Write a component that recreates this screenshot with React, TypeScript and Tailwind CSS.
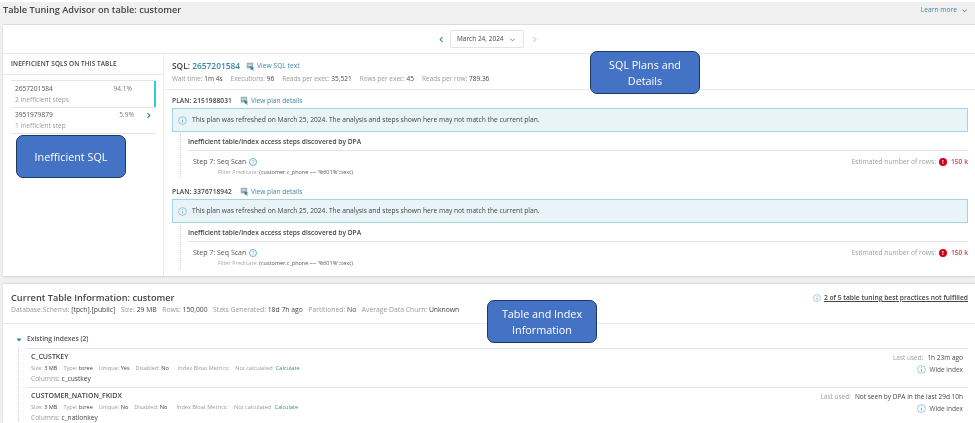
import React from "react";

const font = { fontFamily: '"Open Sans", "Noto Sans", sans-serif' };

function Info({ size = 11 }: { size?: number }) {
  return (
    <svg width={size} height={size} viewBox="0 0 12 12" fill="none" className="shrink-0">
      <circle cx="6" cy="6" r="5.2" stroke="#6fb3c9" strokeWidth="0.9" />
      <path d="M6 5.2V9" stroke="#5a9fb6" strokeWidth="1" />
      <circle cx="6" cy="3.4" r="0.65" fill="#5a9fb6" />
    </svg>
  );
}

function PlanIcon() {
  return (
    <svg width="9" height="9" viewBox="0 0 12 12" className="shrink-0">
      <rect x="1" y="1" width="8.5" height="7.5" fill="#8fa9b5" />
      <rect x="2.2" y="2.4" width="6" height="1" fill="#dfe8ec" />
      <rect x="2.2" y="4.4" width="6" height="1" fill="#dfe8ec" />
      <path d="M5.5 5.5 L11 8 L8.8 9 L10.5 11 L9.5 11.6 L8 9.6 L6.6 11 Z" fill="#2f7f9c" />
    </svg>
  );
}

function M({ k, v, cls = "" }: { k: string; v: string; cls?: string }) {
  return (
    <span className={cls}>
      <span className="text-[#9a9a9a]">{k} </span>
      <span className="text-[#444444]">{v}</span>
    </span>
  );
}

function Plan({ id }: { id: string }) {
  return (
    <div>
      <div className="flex h-[18px] items-center pl-[8px] pt-[3px] text-[6.6px]">
        <span className="font-semibold tracking-[0.1px] text-[#444444]">PLAN: {id}</span>
        <span className="ml-[8px] flex items-center gap-[2px] text-[#3c86a3]">
          <PlanIcon />
          <span className="text-[6.6px]">View plan details</span>
        </span>
      </div>
      <div className="ml-[8px] mr-[7px] flex h-[24px] items-center gap-[5px] border border-[#a5d3e2] bg-[#e8f4f8] pl-[5px] text-[6.7px] text-[#444444]">
        <Info size={9} />
        <span>This plan was refreshed on March 25, 2024. The analysis and steps shown here may not match the current plan.</span>
      </div>
      <div className="ml-[16px] mr-[7px] mt-[1px] border-l border-dotted border-[#cfcfcf] pl-[7px]">
        <div className="flex h-[18px] items-center border-b border-[#e4e4e4] text-[6.65px] font-semibold text-[#444444]">
          Inefficient table/index access steps discovered by DPA
        </div>
        <div className="flex h-[27px] items-start justify-between pl-[5px] pt-[6px]">
          <div>
            <div className="flex items-center gap-[3px] text-[7px] text-[#555555]">
              <span>Step 7: Seq Scan</span>
              <span className="flex h-[8px] w-[8px] items-center justify-center rounded-full border border-[#6fb3c9] text-[5.5px] leading-none text-[#5a9fb6]">?</span>
            </div>
            <div className="ml-[25px] text-[5.5px] leading-[8px]">
              <span className="text-[#a8a8a8]">Filter Predicate: </span>
              <span className="text-[#555555]">(customer.c_phone ~~ '%601%'::text)</span>
            </div>
          </div>
          <div className="flex items-center gap-[3px] text-[6.7px]">
            <span className="text-[#a0a0a0]">Estimated number of rows:</span>
            <span className="flex h-[8px] w-[8px] items-center justify-center rounded-full bg-[#d0021b] text-[6px] font-bold leading-none text-white">!</span>
            <span className="ml-[1px] font-semibold text-[#d9473f]">150 k</span>
          </div>
        </div>
      </div>
    </div>
  );
}

function IndexRow({ name, unique, lastUsed, column }: { name: string; unique: string; lastUsed: string; column: string }) {
  return (
    <div className="flex h-[39px] justify-between border-t border-[#e4e4e4] pl-[5px] pr-[5px]">
      <div className="pt-[1px]">
        <div className="text-[7px] font-semibold leading-[13px] text-[#444444]">{name}</div>
        <div className="flex h-[10px] items-center gap-[6px] text-[5.6px]">
          <M k="Size:" v="3 MB" />
          <M k="Type:" v="btree" />
          <M k="Unique:" v={unique} />
          <M k="Disabled:" v="No" />
          <span className="ml-[3px] text-[#9a9a9a]">Index Bloat Metrics:</span>
          <span className="text-[#9a9a9a]">Not calculated</span>
          <span className="-ml-[3px] text-[#3c86a3]">Calculate</span>
        </div>
        <div className="text-[6.6px] leading-[12px]">
          <M k="Columns:" v={column} />
        </div>
      </div>
      <div className="flex flex-col items-end pt-[2px]">
        <div className="text-[6.5px] leading-[13px]">
          <span className="text-[#a0a0a0]">Last used:</span>
          <span className="ml-[4px] text-[#444444]">{lastUsed}</span>
        </div>
        <div className="mt-[1px] flex items-center gap-[3px] text-[6.5px] text-[#555555]">
          <Info size={9} />
          Wide index
        </div>
      </div>
    </div>
  );
}

function Callout({ cls, children }: { cls: string; children: React.ReactNode }) {
  return (
    <div className={"absolute z-10 flex flex-col items-center justify-center rounded-[7px] border border-[#1f3763] bg-[#4472c4] text-center text-[10.8px] leading-[15.5px] text-white " + cls}>
      {children}
    </div>
  );
}

export default function App() {
  return (
    <div style={font} className="relative h-[423px] w-[975px] overflow-hidden bg-white blur-[0.3px]">
      <div className="mt-[2px] h-[421px] bg-[#f0f0f0] pl-[3px]">
        <div className="flex h-[22px] items-start justify-between pr-[7px] pt-[1px]">
          <h1 className="text-[9.2px] font-semibold leading-[14px] text-[#444444]">Table Tuning Advisor on table: customer</h1>
          <span className="flex items-center gap-[4px] text-[6.7px] leading-[14px] text-[#3c86a3]">
            Learn more
            <svg width="7" height="7" viewBox="0 0 8 8" fill="none"><path d="M1.5 3 L4 5.5 L6.5 3" stroke="#3c86a3" strokeWidth="1.1" /></svg>
          </span>
        </div>

        <section className="h-[252px] border-t border-[#dcdcdc] bg-white shadow-[0_1px_2px_rgba(0,0,0,0.12)]">
          <div className="flex h-[29px] items-center justify-center border-b border-[#ebebeb] pl-[1px] pr-[3px]">
            <svg className="mr-[5px]" width="7" height="7" viewBox="0 0 8 8" fill="none"><path d="M5.2 1.2 L2.5 4 L5.2 6.8" stroke="#2f7f9c" strokeWidth="1.2" /></svg>
            <div className="flex h-[18px] w-[74px] items-center justify-between rounded-[2px] border border-[#e4e4e4] pl-[6px] pr-[7px] text-[6.5px] text-[#444444]">
              March 24, 2024
              <svg width="7" height="7" viewBox="0 0 8 8" fill="none"><path d="M1.5 3 L4 5.5 L6.5 3" stroke="#3c86a3" strokeWidth="1.1" /></svg>
            </div>
            <svg className="ml-[7px]" width="7" height="7" viewBox="0 0 8 8" fill="none"><path d="M2.8 1.2 L5.5 4 L2.8 6.8" stroke="#a8a8a8" strokeWidth="1" /></svg>
          </div>

          <div className="flex h-[222px]">
            <aside className="w-[161px] border-r border-[#ebebeb]">
              <div className="flex h-[21px] items-center border-b border-[#ebebeb] pl-[8px] text-[6.4px] font-semibold tracking-[0.1px] text-[#444444]">
                INEFFICIENT SQLS ON THIS TABLE
              </div>
              <div className="ml-[8px] mr-[7px] mt-[5px] border-y border-[#e4e4e4]">
                <div className="flex h-[26px] justify-between border-r-2 border-[#2ecfdc] pl-[4px] pr-[22px] pt-[2px] text-[6.6px] leading-[11px]">
                  <div>
                    <div className="text-[#555555]">2657201584</div>
                    <div className="text-[#a0a0a0]">2 inefficient steps</div>
                  </div>
                  <div className="text-[#777777]">94.1%</div>
                </div>
                <div className="flex h-[26px] justify-between border-t border-[#e4e4e4] pl-[4px] pr-[22px] pt-[1px] text-[6.6px] leading-[11px]">
                  <div>
                    <div className="text-[#555555]">3951979879</div>
                    <div className="text-[#a0a0a0]">1 inefficient step</div>
                  </div>
                  <div className="relative text-[#777777]">
                    5.9%
                    <svg className="absolute -right-[18px] top-[3px]" width="7" height="7" viewBox="0 0 8 8" fill="none"><path d="M2.8 1.2 L5.5 4 L2.8 6.8" stroke="#2f7f9c" strokeWidth="1.3" /></svg>
                  </div>
                </div>
              </div>
            </aside>

            <main className="flex-1">
              <div className="h-[36px] border-b border-[#ebebeb] pl-[8px] pt-[5px]">
                <div className="flex items-center text-[8.4px] font-semibold leading-[14px]">
                  <span className="text-[#444444]">SQL:&nbsp;</span>
                  <span className="text-[#3c86a3]">2657201584</span>
                  <span className="ml-[6px] flex items-center gap-[2px] text-[6.7px] font-normal text-[#3c86a3]">
                    <PlanIcon /> View SQL text
                  </span>
                </div>
                <div className="flex gap-[8px] text-[6.5px] leading-[12px]">
                  <M k="Wait time:" v="1m 4s" />
                  <M k="Executions:" v="96" />
                  <M k="Reads per exec:" v="35,521" />
                  <M k="Rows per exec:" v="45" />
                  <M k="Reads per row:" v="789.36" />
                </div>
              </div>
              <Plan id="2151988031" />
              <div className="mt-[3px]">
                <Plan id="3376718942" />
              </div>
            </main>
          </div>
        </section>

        <section className="mt-[8px] h-[140px] bg-white shadow-[0_-1px_2px_rgba(0,0,0,0.1)]">
          <div className="flex h-[40px] justify-between border-b border-[#ebebeb] pl-[8px] pr-[7px] pt-[7px]">
            <div>
              <div className="text-[9.2px] font-semibold leading-[14px] text-[#444444]">Current Table Information: customer</div>
              <div className="flex gap-[5.5px] text-[6.8px] leading-[10px]">
                <M k="Database.Schema:" v="[tpch].[public]" />
                <M k="Size:" v="29 MB" />
                <M k="Rows:" v="150,000" />
                <M k="Stats Generated:" v="18d 7h ago" />
                <M k="Partitioned:" v="No" />
                <M k="Average Data Churn:" v="Unknown" />
              </div>
            </div>
            <div className="flex h-[14px] items-center gap-[3px] text-[6.7px] font-semibold text-[#444444]">
              <Info size={8} />
              <span className="underline">2 of 5 table tuning best practices not fulfilled</span>
            </div>
          </div>
          <div className="flex h-[24px] items-center gap-[5px] pl-[13px] pt-[7px] text-[6.7px] font-semibold text-[#555555]">
            <svg width="6" height="6" viewBox="0 0 6 6"><path d="M0.5 1.5 H5.5 L3 4.5 Z" fill="#2f7f9c" /></svg>
            Existing indexes (2)
          </div>
          <div className="ml-[15px] mr-[7px] border-l border-dotted border-[#cfcfcf] pl-[7px]">
            <IndexRow name="C_CUSTKEY" unique="Yes" lastUsed="1h 23m ago" column="c_custkey" />
            <IndexRow name="CUSTOMER_NATION_FKIDX" unique="No" lastUsed="Not seen by DPA in the last 29d 10h" column="c_nationkey" />
          </div>
        </section>
      </div>

      <Callout cls="left-[16px] top-[135px] h-[43px] w-[110px]">Inefficient SQL</Callout>
      <Callout cls="left-[590px] top-[51px] h-[43px] w-[110px]">
        <span>SQL Plans and</span>
        <span>Details</span>
      </Callout>
      <Callout cls="left-[487px] top-[300px] h-[43px] w-[110px]">
        <span>Table and Index</span>
        <span>Information</span>
      </Callout>
    </div>
  );
}
